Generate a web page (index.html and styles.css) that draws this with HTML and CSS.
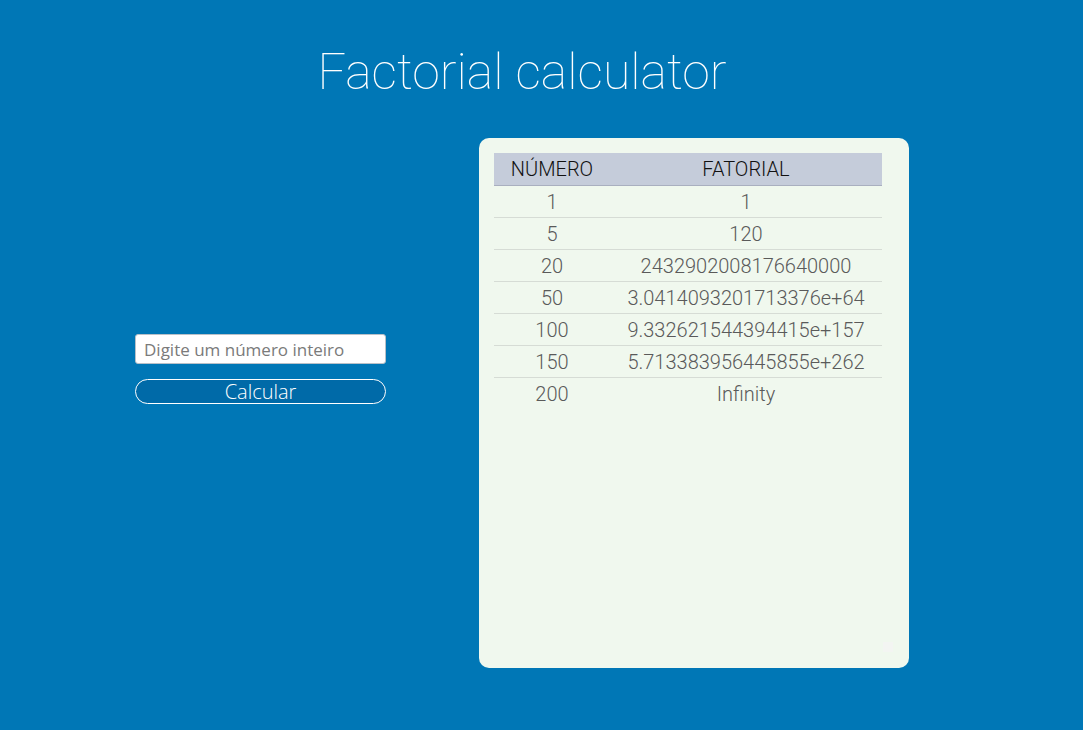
FILE: index.html
```html
<!DOCTYPE html>
<html lang="pt">
<head>
<meta charset="utf-8">
<title>Factorial calculator</title>
<link rel="stylesheet" href="styles.css">
</head>
<body>
<div class="page">
  <h1 class="title">Factorial calculator</h1>
  <main class="main">
    <section class="form">
      <input class="input" type="text" placeholder="Digite um número inteiro">
      <button class="btn" type="button">Calcular</button>
    </section>
    <section class="panel">
      <table class="table">
        <thead>
          <tr><th class="c1">NÚMERO</th><th class="c2">FATORIAL</th></tr>
        </thead>
        <tbody>
          <tr><td>1</td><td>1</td></tr>
          <tr><td>5</td><td>120</td></tr>
          <tr><td>20</td><td>2432902008176640000</td></tr>
          <tr><td>50</td><td>3.0414093201713376e+64</td></tr>
          <tr><td>100</td><td>9.332621544394415e+157</td></tr>
          <tr><td>150</td><td>5.713383956445855e+262</td></tr>
          <tr><td>200</td><td>Infinity</td></tr>
        </tbody>
      </table>
      <span class="corner"></span>
    </section>
  </main>
</div>
</body>
</html>
```
FILE: styles.css
```css
html, body {
  margin: 0;
  padding: 0;
}
body {
  background: #0077b6;
  font-family: Roboto, "Liberation Sans", sans-serif;
  height: 730px;
  overflow: hidden;
}
.page {
  width: 1044px;
}
.title {
  margin: 0;
  padding-top: 40px;
  height: 98px;
  box-sizing: border-box;
  text-align: center;
  color: #ffffff;
  font-family: Roboto, sans-serif;
  font-weight: 100;
  font-size: 50px;
  line-height: 64px;
}
.main {
  display: flex;
  padding-top: 40px;
}
.form {
  display: flex;
  flex-direction: column;
  width: 251px;
  margin-left: 135px;
  padding-top: 196px;
  gap: 15px;
}
.input {
  box-sizing: border-box;
  width: 251px;
  height: 30px;
  margin: 0;
  padding: 0 8px;
  border: 1px solid #b8c0c8;
  border-radius: 3px;
  background: #ffffff;
  font-family: "Open Sans", "Noto Sans", sans-serif;
  font-size: 17px;
  color: #333;
}
.input::placeholder {
  color: #7a7a7a;
}
.btn {
  box-sizing: border-box;
  width: 251px;
  height: 25px;
  margin: 0;
  padding: 0;
  border: 1px solid #ffffff;
  border-radius: 13px;
  background: #006aa8;
  color: #ffffff;
  font-family: "Open Sans", "Noto Sans", sans-serif;
  font-weight: 300;
  font-size: 20px;
  line-height: 21px;
}
.panel {
  position: relative;
  box-sizing: border-box;
  width: 430px;
  height: 530px;
  margin-left: 93px;
  padding: 15px 27px 15px 15px;
  background: #f0f8ee;
  border-radius: 10px;
}
.table {
  width: 388px;
  border-collapse: collapse;
  font-family: Roboto, sans-serif;
  font-weight: 300;
  font-size: 20px;
}
.table th {
  background: #c5ccda;
  color: #111111;
  font-weight: 300;
  height: 32px;
  padding: 0;
  border-bottom: 1px solid #a9afbf;
}
.c1 { width: 116px; }
.c2 { width: 272px; }
.table td {
  text-align: center;
  color: #5a5a5a;
  height: 31px;
  padding: 0;
  border-bottom: 1px solid #d6dcd5;
}
.table tr:last-child td {
  border-bottom: none;
}
.corner {
  position: absolute;
  right: 16px;
  bottom: 16px;
  width: 10px;
  height: 10px;
  background: #f3f5f2;
}
```
